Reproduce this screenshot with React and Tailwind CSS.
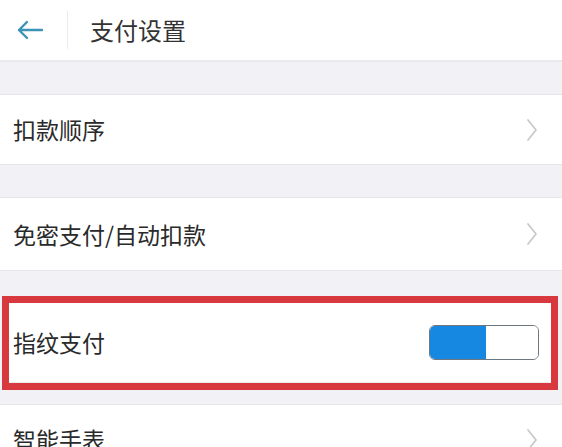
import React from "react";

const Chevron = () => (
  <svg width="12" height="24" viewBox="0 0 12 24" fill="none" className="shrink-0">
    <path d="M2 2 L10 12 L2 22" stroke="#c9c9c9" strokeWidth="1.8" strokeLinecap="round" strokeLinejoin="round" />
  </svg>
);

const Row = ({ label, h = "h-[71px]" }) => (
  <div className={`flex ${h} items-center justify-between border-y border-[#e6e6ea] bg-white pl-[13px] pr-[24px]`}>
    <span className="text-[23px] text-[#2a2a2a]">{label}</span>
    <Chevron />
  </div>
);

export default function App() {
  return (
    <div
      className="h-[447px] w-[562px] overflow-hidden bg-[#f2f2f6]"
      style={{ fontFamily: '"Noto Sans CJK SC", "Noto Sans", sans-serif' }}
    >
      {/* Header */}
      <div className="flex h-[62px] items-center border-b-2 border-[#e9e9ee] bg-white">
        <div className="flex w-[67px] items-center pl-[16px]">
          <svg width="28" height="20" viewBox="0 0 28 20" fill="none">
            <path d="M26 10 H3 M11 2 L3 10 L11 18" stroke="#3d93b5" strokeWidth="2.4" strokeLinecap="round" strokeLinejoin="round" />
          </svg>
        </div>
        <div className="h-[38px] w-px bg-[#ececec]" />
        <span className="ml-[22px] text-[24px] text-[#333]">支付设置</span>
      </div>

      <div className="h-[32px]" />
      <Row label="扣款顺序" />

      <div className="h-[32px]" />
      <Row label="免密支付/自动扣款" h="h-[74px]" />

      <div className="h-[25px]" />
      <div className="ml-[2px] mr-[4px] border-[7px] border-[#d8393f] bg-white">
        <div className="flex h-[80px] items-center justify-between border-b border-[#ececec] pl-[4px] pr-[12px]">
          <span className="text-[23px] text-[#2a2a2a]">指纹支付</span>
          <div className="flex h-[35px] w-[110px] overflow-hidden rounded-[6px] border-[1.5px] border-[#6f7780]">
            <div className="h-full w-[56px] bg-[#1788e2]" />
            <div className="h-full flex-1 bg-white" />
          </div>
        </div>
      </div>

      <div className="h-[14px]" />
      <Row label="智能手表" />
    </div>
  );
}
